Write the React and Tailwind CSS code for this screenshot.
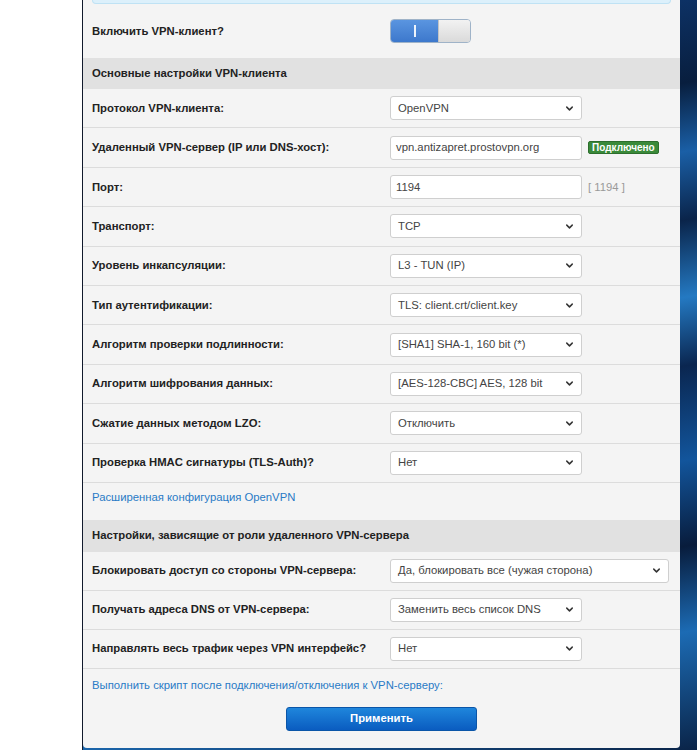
import React from "react";
import { ChevronDown } from "lucide-react";

const font = "font-['Liberation_Sans',Arial,sans-serif]";

const Select = ({ value, wide }) => (
  <div
    className={`flex items-center justify-between h-[24px] ${
      wide ? "w-[279px]" : "w-[192px]"
    } bg-white border border-[#cfcfcf] rounded-[3px] pl-[7px] pr-[6px] text-[11.3px] text-[#444]`}
  >
    <span>{value}</span>
    <ChevronDown size={11} strokeWidth={3.2} className="text-[#333]" />
  </div>
);

const Input = ({ value }) => (
  <div className="flex items-center h-[24px] w-[192px] bg-white border border-[#cfcfcf] rounded-[3px] px-[5px] text-[11.3px] text-[#444]">
    {value}
  </div>
);

const Row = ({ label, children, h = "h-[39.4px]" }) => (
  <div className={`flex items-center ${h} border-b border-[#dcdcdc]`}>
    <div className="w-[307px] pl-[9px] text-[11.3px] font-bold text-[#222]">
      {label}
    </div>
    <div className="flex items-center">{children}</div>
  </div>
);

const Header = ({ title, h }) => (
  <div
    className={`flex items-center ${h} bg-[#e1e1e1] pl-[9px] text-[11.3px] font-bold text-[#222]`}
  >
    {title}
  </div>
);

const main = [
  ["Протокол VPN-клиента:", <Select value="OpenVPN" />],
  [
    "Удаленный VPN-сервер (IP или DNS-хост):",
    <>
      <Input value="vpn.antizapret.prostovpn.org" />
      <span className="ml-[6px] px-[3px] h-[13px] leading-[12px] bg-[#3a8a3a] border border-[#2d6e2d] rounded-[2px] text-[10px] font-bold text-white">
        Подключено
      </span>
    </>,
  ],
  [
    "Порт:",
    <>
      <Input value="1194" />
      <span className="ml-[6px] text-[11.3px] text-[#999]">[ 1194 ]</span>
    </>,
  ],
  ["Транспорт:", <Select value="TCP" />],
  ["Уровень инкапсуляции:", <Select value="L3 - TUN (IP)" />],
  ["Тип аутентификации:", <Select value="TLS: client.crt/client.key" />],
  ["Алгоритм проверки подлинности:", <Select value="[SHA1] SHA-1, 160 bit (*)" />],
  ["Алгоритм шифрования данных:", <Select value="[AES-128-CBC] AES, 128 bit" />],
  ["Сжатие данных методом LZO:", <Select value="Отключить" />],
  ["Проверка HMAC сигнатуры (TLS-Auth)?", <Select value="Нет" />],
];

const role = [
  [
    "Блокировать доступ со стороны VPN-сервера:",
    <Select value="Да, блокировать все (чужая сторона)" wide />,
  ],
  ["Получать адреса DNS от VPN-сервера:", <Select value="Заменить весь список DNS" />],
  ["Направлять весь трафик через VPN интерфейс?", <Select value="Нет" />],
];

export default function App() {
  return (
    <div className={`flex w-full h-[750px] bg-white overflow-hidden ${font}`}>
      <div className="w-[82px] shrink-0 bg-white" />

      {/* wallpaper */}
      <div className="flex-1 h-full border-l border-[#111a2c] pb-[2px] bg-[#0b2344] bg-[linear-gradient(170deg,#08162c_0%,#0d3266_12%,#081e3e_22%,#1a5fa6_30%,#0a244a_38%,#2479c2_47%,#0a2650_55%,#12559c_66%,#081c3c_76%,#1c6bb4_86%,#0a2448_100%)]">
        <div className="w-[597px] h-full bg-[#f4f4f4] rounded-b-[4px] flex flex-col">
          {/* info box edge */}
          <div className="mx-[9px] h-[4px] bg-[#dcf0fb] border border-t-0 border-[#bfe2f4] rounded-b-[4px]" />

          <Row label="Включить VPN-клиент?" h="h-[54px] border-b-0">
            <div className="flex h-[24px] w-[81px] rounded-[4px] border border-[#9fb3c8] overflow-hidden">
              <div className="w-[47px] flex items-center justify-center bg-[linear-gradient(#5a95e0,#3d78cc)]">
                <div className="w-[2px] h-[12px] bg-white/90" />
              </div>
              <div className="flex-1 bg-[linear-gradient(#f2f2f2,#dadada)] border-l border-[#c4c4c4]" />
            </div>
          </Row>

          <Header title="Основные настройки VPN-клиента" h="h-[31px]" />

          {main.map(([label, ctl]) => (
            <Row key={label} label={label}>
              {ctl}
            </Row>
          ))}

          <div className="h-[37px] pl-[9px] pt-[7px] text-[11.3px] leading-[14px] text-[#2a7bc6]">
            Расширенная конфигурация OpenVPN
          </div>

          <Header
            title="Настройки, зависящие от роли удаленного VPN-сервера"
            h="h-[32px]"
          />

          {role.map(([label, ctl]) => (
            <Row key={label} label={label} h="h-[39px]">
              {ctl}
            </Row>
          ))}

          <div className="pl-[9px] pt-[9px] text-[11.3px] leading-[14px] text-[#2a7bc6]">
            Выполнить скрипт после подключения/отключения к VPN-серверу:
          </div>

          <div className="flex justify-center mt-[15px]">
            <button className="w-[191px] h-[24px] rounded-[3px] border border-[#0a55a8] bg-[linear-gradient(#1f86dc,#0a5cc0)] text-[11.3px] font-bold text-white">
              Применить
            </button>
          </div>
        </div>
      </div>
    </div>
  );
}
